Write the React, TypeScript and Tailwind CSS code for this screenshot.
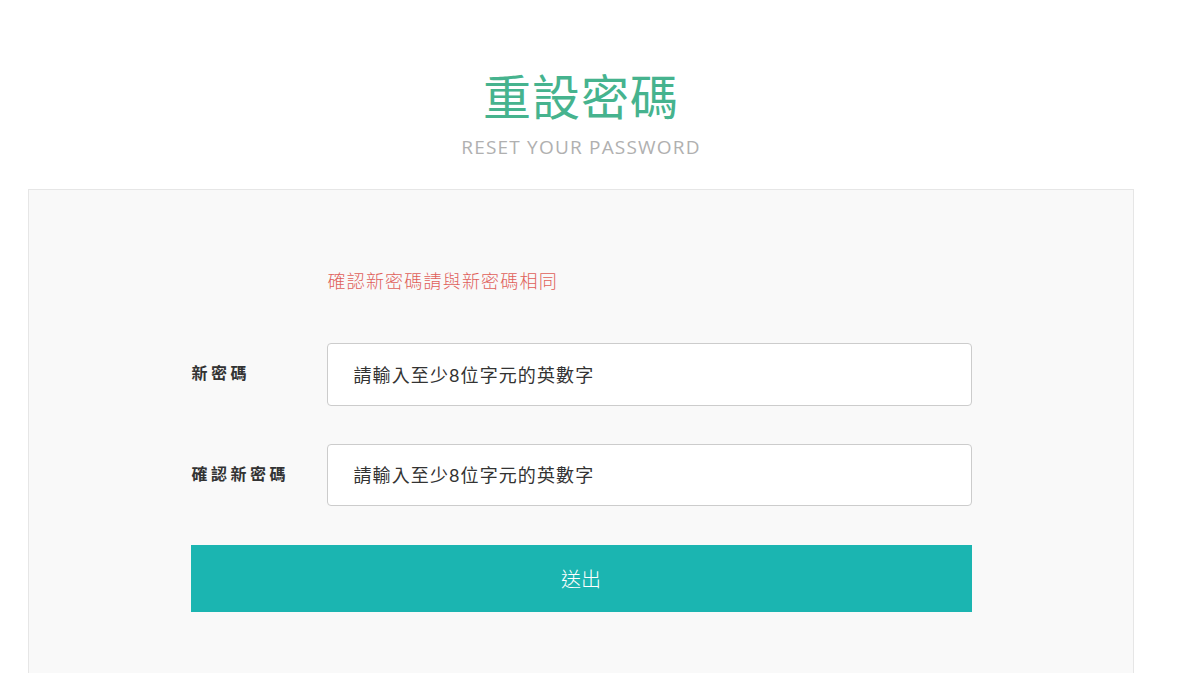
export default function App() {
  const cjk = '"Lato", "Noto Sans CJK TC", sans-serif'
  return (
    <div className="w-[1162px] bg-white pt-[68px]" style={{ fontFamily: cjk }}>
      {/* heading */}
      <div className="text-center">
        <h1 className="text-[48px] leading-[58px] font-normal text-[#46b38e] tracking-[1px]">重設密碼</h1>
        <p className="mt-[9px] text-[19px] leading-[24px] text-[#b0b0b0] tracking-[1.2px] font-['Open_Sans',sans-serif]">RESET YOUR PASSWORD</p>
      </div>

      {/* panel */}
      <div className="mx-[28px] mt-[30px] h-[500px] border border-[#e6e6e6] bg-[#f9f9f9] pt-[79px]">
        <form className="mx-auto w-[781px]">
          <p className="ml-[137px] text-[18px] leading-[24px] text-[#e0605a] tracking-[1.2px] font-light">確認新密碼請與新密碼相同</p>

          <div className="mt-[50px] flex items-center">
            <label className="w-[136px] pl-[1px] pb-[3px] text-[16px] font-bold text-[#333] tracking-[3.5px]">新密碼</label>
            <input
              type="password"
              placeholder="請輸入至少8位字元的英數字"
              className="h-[63px] flex-1 rounded-[4px] border border-[#cccccc] bg-white px-[26px] text-[18px] tracking-[1.1px] text-[#333] placeholder:text-[#333] outline-none"
            />
          </div>

          <div className="mt-[38px] flex items-center">
            <label className="w-[136px] pl-[1px] pb-[3px] text-[16px] font-bold text-[#333] tracking-[3.5px]">確認新密碼</label>
            <input
              type="password"
              placeholder="請輸入至少8位字元的英數字"
              className="h-[62px] flex-1 rounded-[4px] border border-[#cccccc] bg-white px-[26px] text-[18px] tracking-[1.1px] text-[#333] placeholder:text-[#333] outline-none"
            />
          </div>

          <button
            type="button"
            className="mt-[39px] h-[67px] w-full bg-[#1bb5b1] text-[20px] font-light text-white"
          >
            送出
          </button>
        </form>
      </div>
    </div>
  )
}
